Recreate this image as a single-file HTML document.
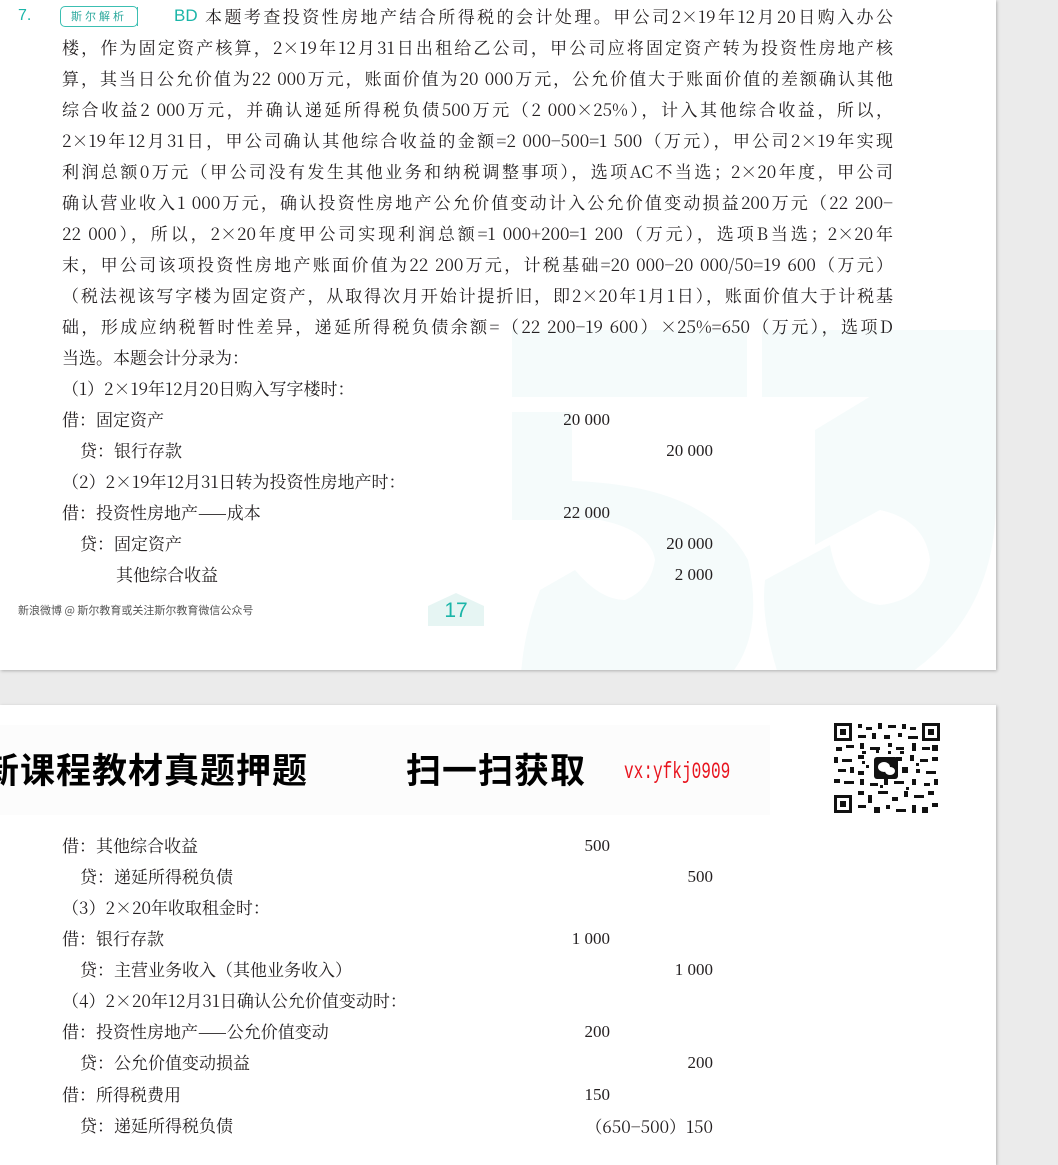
<!DOCTYPE html>
<html><head><meta charset="utf-8"><style>
body{margin:0;width:1058px;height:1148px;background:#ebebeb;position:relative;overflow:hidden;font-family:"Noto Serif CJK SC","Liberation Serif",serif;color:#231f20}
.pg{position:absolute;left:0;width:996px;background:#fff;box-shadow:1px 1px 3px rgba(0,0,0,.25);overflow:hidden}
.l{position:absolute;left:62px;font-size:17px;line-height:20px;white-space:nowrap}
.j{width:831px;text-align:justify;text-align-last:justify;white-space:normal}
.n{position:absolute;font-family:"Liberation Serif",serif;font-size:17px;line-height:20px;text-align:right;width:200px}
</style></head><body>
<div class="pg" style="top:0;height:670px">
<svg style="position:absolute;left:0;top:0" width="996" height="670">
<g fill="#f5fbfb">
<rect x="512" y="330" width="235" height="67"/>
<rect x="512" y="412" width="60" height="70"/>
<path d="M512 482 Q700 470 748 560 Q770 660 700 700 L520 700 Q520 640 540 590 L575 570 Q600 600 625 600 Q650 590 655 560 Q650 530 600 520 L512 520Z"/>
<rect x="762" y="330" width="235" height="67"/>
<path d="M815 430 L980 330 L996 330 L996 500 Q996 620 900 680 L780 680 Q760 620 765 580 L830 545 Q840 600 880 605 Q925 600 930 560 Q925 520 880 510 L815 545Z"/>
</g></svg>
<div style="position:absolute;left:18px;top:7px;font:16px 'Liberation Sans',sans-serif;color:#1bb5a8">7.</div>
<div style="position:absolute;left:60px;top:6px;width:76px;height:19px;border:1.5px solid #3cbfb2;border-radius:5px;font:11px 'Noto Sans CJK SC',sans-serif;color:#2aa89c;text-align:center;line-height:19px;letter-spacing:3px">斯尔解析</div>
<div style="position:absolute;left:134px;top:7px;width:3px;height:19px;border-right:1.5px solid #3cbfb2"></div>
<div style="position:absolute;left:174px;top:6px;font:17px 'Liberation Sans',sans-serif;color:#1bb5a8">BD</div>
<div class="l" style="left:205px;top:6px;width:688px;text-align:justify;text-align-last:justify;white-space:normal">本题考查投资性房地产结合所得税的会计处理。甲公司2×19年12月20日购入办公</div>
<div class="l j" style="top:37px">楼，作为固定资产核算，2×19年12月31日出租给乙公司，甲公司应将固定资产转为投资性房地产核</div>
<div class="l j" style="top:68px">算，其当日公允价值为22 000万元，账面价值为20 000万元，公允价值大于账面价值的差额确认其他</div>
<div class="l j" style="top:99px">综合收益2 000万元，并确认递延所得税负债500万元（2 000×25%），计入其他综合收益，所以，</div>
<div class="l j" style="top:130px">2×19年12月31日，甲公司确认其他综合收益的金额=2 000−500=1 500（万元），甲公司2×19年实现</div>
<div class="l j" style="top:161px">利润总额0万元（甲公司没有发生其他业务和纳税调整事项），选项AC不当选；2×20年度，甲公司</div>
<div class="l j" style="top:192px">确认营业收入1 000万元，确认投资性房地产公允价值变动计入公允价值变动损益200万元（22 200−</div>
<div class="l j" style="top:223px">22 000），所以，2×20年度甲公司实现利润总额=1 000+200=1 200（万元），选项B当选；2×20年</div>
<div class="l j" style="top:254px">末，甲公司该项投资性房地产账面价值为22 200万元，计税基础=20 000−20 000/50=19 600（万元）</div>
<div class="l j" style="top:285px">（税法视该写字楼为固定资产，从取得次月开始计提折旧，即2×20年1月1日），账面价值大于计税基</div>
<div class="l j" style="top:316px">础，形成应纳税暂时性差异，递延所得税负债余额=（22 200−19 600）×25%=650（万元），选项D</div>
<div class="l" style="top:347px">当选。本题会计分录为：</div>
<div class="l" style="top:378px">（1）2×19年12月20日购入写字楼时：</div>
<div class="l" style="top:409px">借：固定资产</div><div class="n" style="left:410px;top:410px">20 000</div>
<div class="l" style="left:80px;top:440px">贷：银行存款</div><div class="n" style="left:513px;top:441px">20 000</div>
<div class="l" style="top:471px">（2）2×19年12月31日转为投资性房地产时：</div>
<div class="l" style="top:502px">借：投资性房地产——成本</div><div class="n" style="left:410px;top:503px">22 000</div>
<div class="l" style="left:80px;top:533px">贷：固定资产</div><div class="n" style="left:513px;top:534px">20 000</div>
<div class="l" style="left:116px;top:564px">其他综合收益</div><div class="n" style="left:513px;top:565px">2 000</div>
<div style="position:absolute;left:18px;top:602px;font:11px 'Noto Sans CJK SC',sans-serif;color:#555">新浪微博 @ 斯尔教育或关注斯尔教育微信公众号</div>
<div style="position:absolute;left:428px;top:606px;width:56px;height:20px;background:#e6f5f3"></div>
<div style="position:absolute;left:428px;top:593px;width:0;height:0;border-left:28px solid transparent;border-right:28px solid transparent;border-bottom:13px solid #e6f5f3"></div>
<div style="position:absolute;left:428px;top:599px;width:56px;text-align:center;font:21px 'Liberation Sans',sans-serif;color:#1bb5a8">17</div>
</div>
<div class="pg" style="top:705px;height:460px">
<div style="position:absolute;left:0;top:20px;width:770px;height:90px;background:#fcfcfc"></div>
<div style="position:absolute;left:-16px;top:38px;font:bold 35px 'WenQuanYi Zen Hei','Noto Sans CJK SC',sans-serif;color:#000;white-space:nowrap;letter-spacing:1px">新课程教材真题押题</div>
<div style="position:absolute;left:406px;top:38px;font:bold 35px 'WenQuanYi Zen Hei','Noto Sans CJK SC',sans-serif;color:#000;white-space:nowrap;letter-spacing:1px">扫一扫获取</div>
<div style="position:absolute;left:624px;top:54px;font:23px 'Liberation Mono',monospace;color:#e8141e;transform:scaleX(.7);transform-origin:left;white-space:nowrap">vx:yfkj0909</div>
<svg style="position:absolute;left:832px;top:16px" width="110" height="94" viewBox="0 0 110 94">
<rect width="110" height="94" fill="#fff"/>
<g fill="#111">
<rect x="2" y="2" width="18" height="18"/><rect x="5" y="5" width="12" height="12" fill="#fff"/><rect x="8" y="8" width="6" height="6"/>
<rect x="90" y="2" width="18" height="18"/><rect x="93" y="5" width="12" height="12" fill="#fff"/><rect x="96" y="8" width="6" height="6"/>
<rect x="2" y="74" width="18" height="18"/><rect x="5" y="77" width="12" height="12" fill="#fff"/><rect x="8" y="80" width="6" height="6"/>
<path d="M26 3h4v4h-4zM34 6h6v3h-6zM46 2h4v6h-4zM56 4h8v3h-8zM70 3h4v5h-4zM78 6h6v3h-6zM26 14h8v3h-8zM40 12h4v6h-4zM52 14h6v4h-6zM66 12h4v4h-4zM76 15h10v3h-10zM4 26h6v4h-6zM14 24h8v3h-8zM28 22h4v6h-4zM38 26h10v3h-10zM56 22h4v4h-4zM64 26h8v3h-8zM80 22h4v8h-4zM90 26h8v3h-8zM100 24h6v6h-6zM2 36h4v6h-4zM10 38h10v3h-10zM26 34h6v4h-6zM64 36h6v4h-6zM78 34h4v6h-4zM88 38h8v3h-8zM100 36h6v4h-6zM6 48h8v3h-8zM18 46h4v6h-4zM26 50h6v4h-6zM70 46h6v6h-6zM84 48h4v4h-4zM94 50h10v3h-10zM2 58h6v4h-6zM12 60h10v3h-10zM28 58h4v6h-4zM38 62h8v3h-8zM52 58h4v6h-4zM62 60h10v3h-10zM80 58h4v6h-4zM92 62h6v3h-6zM102 58h4v6h-4zM26 70h6v4h-6zM36 74h4v8h-4zM46 70h10v3h-10zM60 76h6v4h-6zM72 70h4v6h-4zM82 74h10v3h-10zM96 70h6v4h-6zM26 84h8v3h-8zM42 86h6v6h-6zM54 84h4v4h-4zM64 88h10v3h-10zM80 84h4v8h-4zM90 86h6v6h-6zM100 82h6v4h-6z"/>
<path d="M30 30h4v3h-4zM44 28h3v4h-3zM68 30h4v3h-4zM34 44h3v3h-3zM84 42h3v3h-3zM48 64h3v3h-3zM74 66h3v3h-3zM30 40h3v3h-3zM56 30h3v3h-3z"/>
<rect x="42" y="36" width="24" height="22" rx="3"/>
</g>
<ellipse cx="52" cy="46" rx="6" ry="5" fill="#fff"/><ellipse cx="58" cy="50" rx="5" ry="4" fill="#fff"/>
</svg>
<div class="l" style="top:130px">借：其他综合收益</div><div class="n" style="left:410px;top:131px">500</div>
<div class="l" style="left:80px;top:161px">贷：递延所得税负债</div><div class="n" style="left:513px;top:162px">500</div>
<div class="l" style="top:192px">（3）2×20年收取租金时：</div>
<div class="l" style="top:223px">借：银行存款</div><div class="n" style="left:410px;top:224px">1 000</div>
<div class="l" style="left:80px;top:254px">贷：主营业务收入（其他业务收入）</div><div class="n" style="left:513px;top:255px">1 000</div>
<div class="l" style="top:285px">（4）2×20年12月31日确认公允价值变动时：</div>
<div class="l" style="top:316px">借：投资性房地产——公允价值变动</div><div class="n" style="left:410px;top:317px">200</div>
<div class="l" style="left:80px;top:347px">贷：公允价值变动损益</div><div class="n" style="left:513px;top:348px">200</div>
<div class="l" style="top:379px">借：所得税费用</div><div class="n" style="left:410px;top:380px">150</div>
<div class="l" style="left:80px;top:410px">贷：递延所得税负债</div><div class="n" style="left:413px;top:411px;width:300px;font-family:'Noto Serif CJK SC',serif">（650−500）150</div>
</div>
</body></html>
